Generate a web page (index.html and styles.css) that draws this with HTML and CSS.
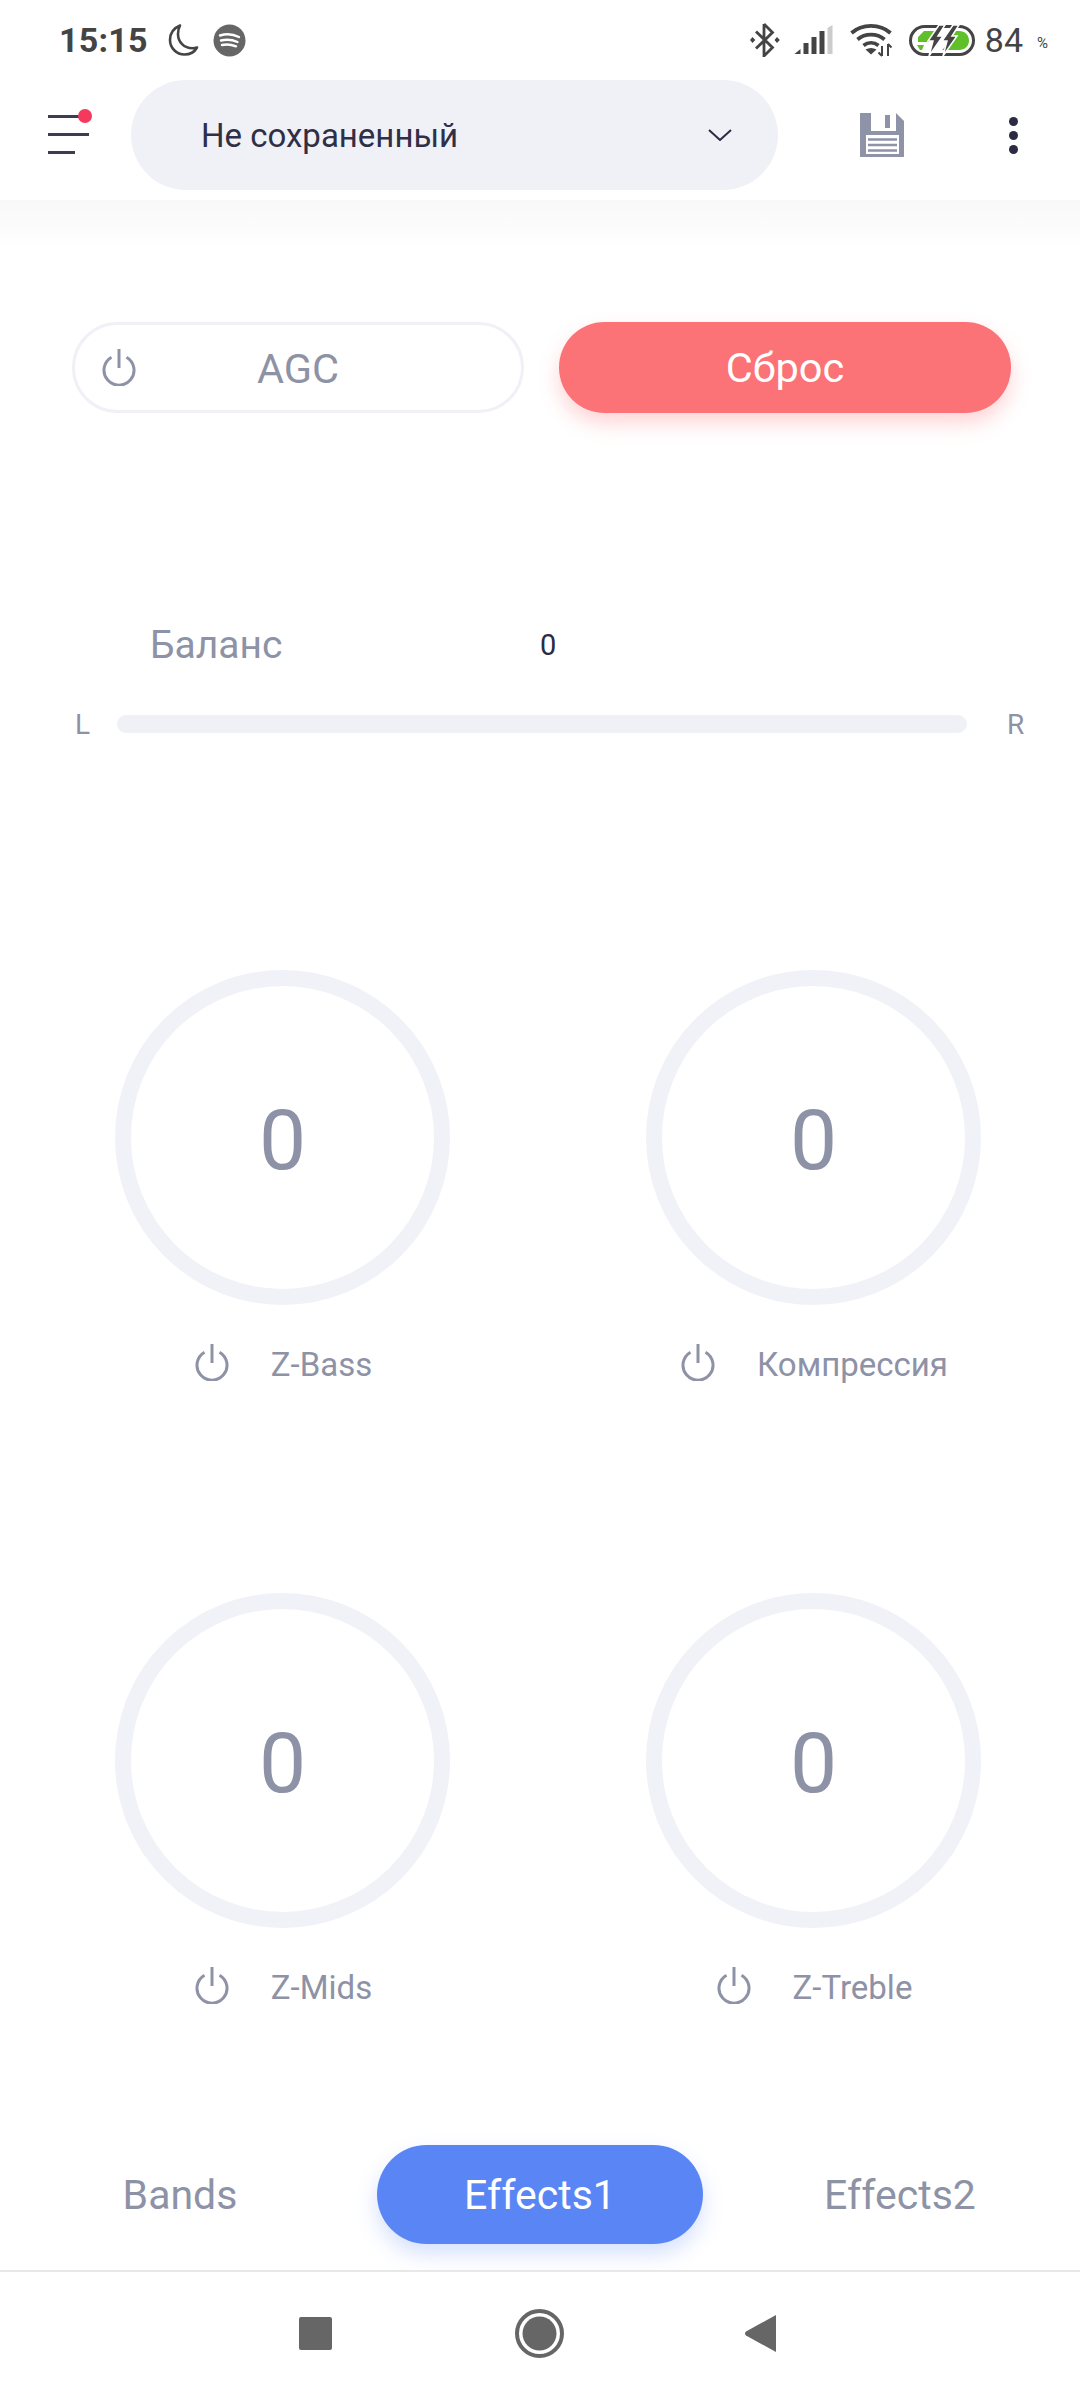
FILE: index.html
```html
<!DOCTYPE html>
<html lang="ru">
<head>
  <meta charset="UTF-8" />
  <meta name="viewport" content="width=device-width, initial-scale=1.0"/>
  <title>Эквалайзер</title>
  <link rel="stylesheet" href="styles.css">
</head>
<body>

<svg class="defs" width="0" height="0">
  <symbol id="power" viewBox="0 0 34 37">
    <path d="M9.5 8.2a15 15 0 1 0 15 0" fill="none" stroke="currentColor" stroke-width="3"/>
    <path d="M17 0v19" fill="none" stroke="currentColor" stroke-width="3"/>
  </symbol>
</svg>

<div class="page">

  <div class="status-bar">
    <span class="time">15:15</span>
    <svg class="moon" width="32" height="34" viewBox="0 0 32 34">
      <path d="M13 2.5C7 5 3 10 3 17c0 8 6.500 14.500 14.500 14.500 5.500 0 10-2.500 12.500-7-1.500.5-3 .7-4.500.7C17 25.200 11 19 11 11c0-3 .7-6 2-8.500z" fill="none" stroke="#444" stroke-width="2.600" stroke-linejoin="round"/>
    </svg>
    <svg class="spotify" width="33" height="33" viewBox="0 0 33 33">
      <circle cx="16.500" cy="16.500" r="16" fill="#666"/>
      <path d="M7 11.500c6-1.800 13-1.400 19 1.500M8 16.500c5.500-1.400 11-1 16.500 1.500M9 21c4.500-1 9-.7 14 1.300" fill="none" stroke="#fff" stroke-width="2.400" stroke-linecap="round"/>
    </svg>
    <div class="status-right">
      <svg width="30" height="34" viewBox="0 0 30 34">
        <path d="M14 1v32l8.500-8.500L6 8.500M14 1l8.500 8.500L6 25.500" fill="none" stroke="#444" stroke-width="2.800"/>
        <path d="M2.500 14l2.800 3-2.800 3-2.500-3zM27 14l2.800 3-2.800 3-2.500-3z" fill="#444"/>
      </svg>
      <svg class="signal" width="40" height="30" viewBox="0 0 39 30">
        <path d="M0 29l6-5v5z" fill="#444"/>
        <rect x="9" y="18" width="5" height="11" fill="#444"/>
        <rect x="17" y="12" width="5" height="17" fill="#444"/>
        <rect x="25" y="6" width="5" height="23" fill="#444"/>
        <path d="M33 3l5-3v29h-5z" fill="#ccc"/>
      </svg>
      <svg class="wifi" width="43" height="34" viewBox="0 0 43 34">
        <path d="M1.500 10C12 .5 30 .5 40.500 10M7.500 16.500c7.500-6.500 19.500-6.500 27 0M13.500 22.500c4.500-3.500 10.500-3.500 15 0" fill="none" stroke="#444" stroke-width="3.800"/>
        <path d="M15.500 26.500c3.500-2 7.500-2 11 0L21 31.500z" fill="#444"/>
        <path d="M32 33V23M28.500 29.500l3.500 3.500M38 33V21M38 21l3.500 3.500" fill="none" stroke="#444" stroke-width="2"/>
      </svg>
      <svg class="battery" width="66" height="31" viewBox="0 0 66 31">
        <rect x="1.500" y="1.500" width="63" height="28" rx="14" fill="none" stroke="#444" stroke-width="3"/>
        <path d="M15 6h13l-8 11h-11V12zM8 20h7l-2 5H11z" fill="#5fc02a"/>
        <path d="M44 6h6c6 0 10 4 10 9.500S56 25 50 25H33l8-8h-5z" fill="#5fc02a"/>
        <path d="M30 0h6l-7 11h5L20 31l4-15h-5zM44 0h6l-7 11h5L34 31l4-15h-5z" fill="#444" stroke="#fff" stroke-width="1.500"/>
      </svg>
      <span class="battery-num">84</span>
      <span class="battery-pct">%</span>
    </div>
  </div>

  <header class="app-header">
    <div class="menu-btn">
      <span class="menu-line line-1"></span>
      <span class="menu-line line-2"></span>
      <span class="menu-line line-3"></span>
      <span class="menu-dot"></span>
    </div>
    <div class="preset-select">
      <span>Не сохраненный</span>
      <svg width="24" height="12" viewBox="0 0 24 12">
        <path d="M1 1l11 10L23 1" fill="none" stroke="#2b2b42" stroke-width="2"/>
      </svg>
    </div>
    <svg class="save-icon" width="44" height="44" viewBox="0 0 44 44">
      <path d="M0 0h11v18h25V0l8 8v36H0z" fill="#8f93a8"/>
      <rect x="25" y="2" width="5" height="13" fill="#8f93a8"/>
      <rect x="6" y="22" width="33" height="19" fill="#fff"/>
      <path d="M8 26.500h29M8 32h29M8 37.500h29" stroke="#8f93a8" stroke-width="2.500"/>
    </svg>
    <div class="more-btn">
      <span></span><span></span><span></span>
    </div>
  </header>

  <main class="content">
    <div class="top-buttons">
      <div class="btn btn-agc">
        <svg class="power"><use href="#power"/></svg>
        <span>AGC</span>
      </div>
      <div class="btn btn-reset">Сброс</div>
    </div>

    <div class="balance-head">
      <span class="balance-title">Баланс</span>
      <span class="balance-value">0</span>
    </div>
    <div class="balance-slider">
      <span class="side side-l">L</span>
      <div class="track"></div>
      <span class="side side-r">R</span>
    </div>

    <div class="knobs">
      <div class="knob-cell">
        <div class="knob">0</div>
        <div class="knob-label"><svg class="power"><use href="#power"/></svg><span>Z-Bass</span></div>
      </div>
      <div class="knob-cell">
        <div class="knob">0</div>
        <div class="knob-label"><svg class="power"><use href="#power"/></svg><span>Компрессия</span></div>
      </div>
      <div class="knob-cell">
        <div class="knob">0</div>
        <div class="knob-label"><svg class="power"><use href="#power"/></svg><span>Z-Mids</span></div>
      </div>
      <div class="knob-cell">
        <div class="knob">0</div>
        <div class="knob-label"><svg class="power"><use href="#power"/></svg><span>Z-Treble</span></div>
      </div>
    </div>

    <nav class="tabs">
      <div class="tab">Bands</div>
      <div class="tab active">Effects1</div>
      <div class="tab">Effects2</div>
    </nav>
  </main>

  <div class="nav-bar">
    <svg width="33" height="33" viewBox="0 0 33 33"><rect width="33" height="33" rx="2" fill="#666"/></svg>
    <svg class="nav-home" width="49" height="49" viewBox="0 0 49 49">
      <circle cx="24.500" cy="24.500" r="22.500" fill="none" stroke="#666" stroke-width="4"/>
      <circle cx="24.500" cy="24.500" r="17" fill="#666"/>
    </svg>
    <svg width="31" height="37" viewBox="0 0 31 37"><path d="M31 0v37L1 20.500a2.500 2.500 0 0 1 0-4z" fill="#666"/></svg>
  </div>

</div>

</body>
</html>
```

FILE: styles.css
```css
body {
  margin: 0;
  background: #fff;
  font-family: Roboto, sans-serif;
  color: #8e92a6;
}

.defs {
  position: absolute;
}

.page {
  width: 1080px;
  height: 2400px;
  display: flex;
  flex-direction: column;
  background: #fff;
}

/* status bar */
.status-bar {
  height: 80px;
  box-sizing: border-box;
  padding: 0 32px 0 59px;
  display: flex;
  align-items: center;
  background: #fff;
}

.time {
  font-size: 34px;
  font-weight: 700;
  color: #444;
  letter-spacing: 0.2px;
}

.moon {
  margin-left: 19px;
}

.spotify {
  margin-left: 14px;
}

.status-right {
  margin-left: auto;
  display: flex;
  align-items: center;
}

.signal {
  margin-left: 14px;
}

.wifi {
  margin-left: 16px;
}

.battery {
  margin-left: 16px;
}

.battery-num {
  margin-left: 10px;
  font-size: 34px;
  color: #444;
}

.battery-pct {
  margin-left: 14px;
  margin-top: 6px;
  font-size: 15px;
  color: #444;
}

/* header */
.app-header {
  height: 120px;
  display: flex;
  align-items: flex-start;
  background: #fff;
}

.menu-btn {
  position: relative;
  width: 42px;
  height: 46px;
  margin: 35px 41px 0 48px;
}

.menu-line {
  display: block;
  height: 3px;
  background: #3c3c52;
  margin-bottom: 15px;
}

.line-1 {
  width: 32px;
}

.line-2 {
  width: 41px;
}

.line-3 {
  width: 27px;
}

.menu-dot {
  position: absolute;
  top: -6px;
  left: 30px;
  width: 14px;
  height: 14px;
  border-radius: 50%;
  background: #f43a5c;
}

.preset-select {
  width: 647px;
  height: 110px;
  box-sizing: border-box;
  padding: 0 46px 0 70px;
  display: flex;
  align-items: center;
  justify-content: space-between;
  border-radius: 55px;
  background: #f0f1f7;
  font-size: 33px;
  color: #2f2f46;
}

.save-icon {
  margin: 33px 0 0 82px;
}

.more-btn {
  margin: 37px 0 0 105px;
  display: flex;
  flex-direction: column;
  gap: 5px;
}

.more-btn span {
  width: 9px;
  height: 9px;
  border-radius: 50%;
  background: #2b2b42;
}

/* main area */
.content {
  flex: 1;
  display: flex;
  flex-direction: column;
  background: linear-gradient(#f8f8f8, #fff 50px);
}

.top-buttons {
  margin: 122px 69px 0 72px;
  display: flex;
  gap: 35px;
}

.btn {
  width: 452px;
  height: 91px;
  box-sizing: border-box;
  border-radius: 46px;
  font-size: 41.5px;
}

.btn-agc {
  display: grid;
  grid-template-columns: 1fr auto 1fr;
  align-items: center;
  padding: 2px 27px 0;
  border: 3px solid #f0f1f7;
}

.btn-agc .power {
  width: 34px;
  height: 37px;
  margin-top: -3px;
}

.btn-reset {
  display: flex;
  align-items: center;
  justify-content: center;
  background: #fb7277;
  color: #fff;
  box-shadow: 0 10px 20px rgba(251, 114, 119, 0.3);
}

.balance-head {
  margin: 207px 0 0 150px;
  height: 50px;
  display: flex;
  align-items: center;
}

.balance-title {
  width: 390px;
  font-size: 39px;
}

.balance-value {
  font-size: 29px;
  color: #2b2b42;
}

.balance-slider {
  margin-top: 45px;
  padding: 0 56px 0 75px;
  height: 18px;
  display: flex;
  align-items: center;
  font-size: 28px;
}

.side-l {
  width: 42px;
}

.side-r {
  width: 17px;
  padding-left: 40px;
}

.track {
  flex: 1;
  height: 18px;
  border-radius: 9px;
  background: #f0f1f7;
}

.knobs {
  margin: 237px 0 0 17px;
  display: grid;
  grid-template-columns: 531px 531px;
  row-gap: 209px;
}

.knob-cell {
  display: flex;
  flex-direction: column;
  align-items: center;
}

.knob {
  width: 335px;
  height: 335px;
  box-sizing: border-box;
  padding-top: 6px;
  display: flex;
  align-items: center;
  justify-content: center;
  border: 16px solid #f1f2f8;
  border-radius: 50%;
  font-size: 84px;
}

.knob-label {
  margin: 39px 0 0 2px;
  height: 40px;
  display: flex;
  align-items: center;
  gap: 42px;
  font-size: 33px;
}

.knob-label .power {
  width: 34px;
  height: 37px;
  margin-top: -3px;
}

/* bottom tabs */
.tabs {
  margin-top: auto;
  padding-bottom: 26px;
  display: grid;
  grid-template-columns: 360px 360px 360px;
  justify-items: center;
}

.tab {
  width: 326px;
  height: 99px;
  display: flex;
  align-items: center;
  justify-content: center;
  border-radius: 50px;
  font-size: 41px;
}

.tab.active {
  background: #5a86f5;
  color: #fff;
  box-shadow: 0 10px 20px rgba(90, 134, 245, 0.25);
}

.nav-bar {
  height: 130px;
  box-sizing: border-box;
  padding: 0 5px 5px 0;
  display: flex;
  align-items: center;
  justify-content: center;
  gap: 182px;
  border-top: 2px solid #e8e8e8;
  background: #fff;
}

.nav-home {
  margin: 0 -1px 0 1px;
}
```
